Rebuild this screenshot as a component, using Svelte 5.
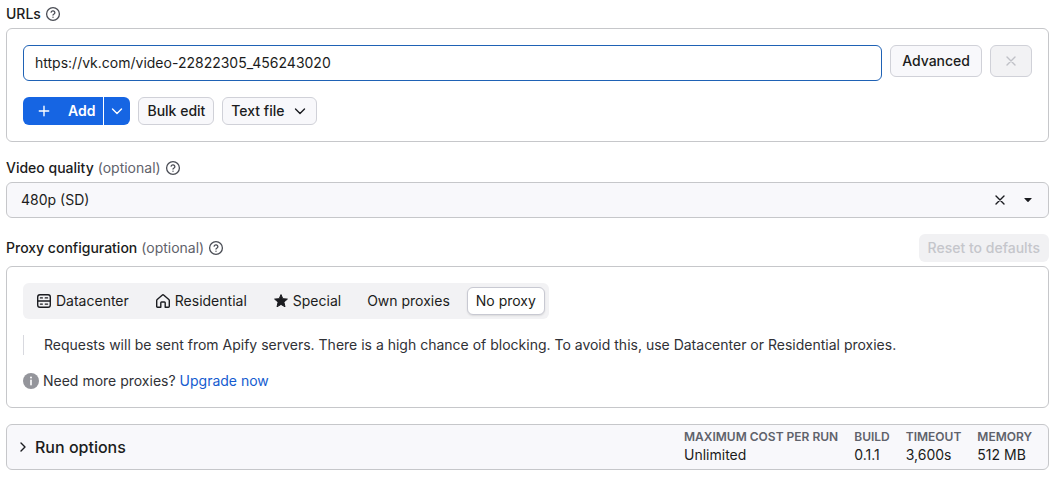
<script>
  let url = $state('https://vk.com/video-22822305_456243020');
  let quality = $state('480p (SD)');
  let proxy = $state('No proxy');
  const proxies = [
    { name: 'Datacenter', icon: 'server' },
    { name: 'Residential', icon: 'home' },
    { name: 'Special', icon: 'star' },
    { name: 'Own proxies' },
    { name: 'No proxy' }
  ];
  const stats = [
    ['Maximum cost per run', 'Unlimited'],
    ['Build', '0.1.1'],
    ['Timeout', '3,600s'],
    ['Memory', '512 MB']
  ];
</script>

{#snippet help()}
  <svg class="help" width="16" height="16" viewBox="0 0 16 16" fill="none" stroke="currentColor" stroke-width="1.3" stroke-linecap="round" stroke-linejoin="round" aria-hidden="true">
    <circle cx="8" cy="8" r="6.4" />
    <path d="M6.1 6.2a1.95 1.95 0 0 1 3.8.6c0 1.3-1.9 1.6-1.9 2.3" />
    <path d="M8 11.2v.1" />
  </svg>
{/snippet}

{#snippet chevron()}
  <svg width="16" height="16" viewBox="0 0 16 16" fill="none" stroke="currentColor" stroke-width="1.4" stroke-linecap="round" stroke-linejoin="round" aria-hidden="true">
    <path d="M3.5 6 8 10.5 12.5 6" />
  </svg>
{/snippet}

{#snippet cross()}
  <svg width="16" height="16" viewBox="0 0 16 16" fill="none" stroke="currentColor" stroke-width="1.4" stroke-linecap="round" aria-hidden="true">
    <path d="M4 4l8 8M12 4l-8 8" />
  </svg>
{/snippet}

<main>
  <section>
    <div class="heading"><label for="url">URLs</label>{@render help()}</div>
    <div class="panel">
      <div class="url-row">
        <input id="url" type="text" spellcheck="false" bind:value={url} />
        <button class="btn large">Advanced</button>
        <button class="btn remove" disabled aria-label="Remove URL">{@render cross()}</button>
      </div>
      <div class="actions">
        <div class="split">
          <button class="add">
            <svg width="16" height="16" viewBox="0 0 16 16" fill="none" stroke="currentColor" stroke-width="1.4" stroke-linecap="round" aria-hidden="true"><path d="M8 3.3v9.4M3.3 8h9.4" /></svg>
            Add
          </button>
          <button class="more" aria-label="More add options">{@render chevron()}</button>
        </div>
        <button class="btn">Bulk edit</button>
        <button class="btn file">Text file {@render chevron()}</button>
      </div>
    </div>
  </section>

  <section>
    <div class="heading"><label for="quality">Video quality</label><span class="optional">(optional)</span>{@render help()}</div>
    <div class="select">
      <select id="quality" bind:value={quality}>
        <option>480p (SD)</option>
      </select>
      <button aria-label="Clear video quality" onclick={() => (quality = '')}>{@render cross()}</button>
      <svg width="8" height="4" viewBox="0 0 8 4" fill="currentColor" aria-hidden="true"><path d="M.6 0h6.8q.5 0 .2.5L4.5 3.7q-.5.5-1 0L.4.5Q.1 0 .6 0z" /></svg>
    </div>
  </section>

  <section>
    <div class="heading tall">
      <span id="proxy-label">Proxy configuration</span><span class="optional">(optional)</span>{@render help()}
      <button class="reset" disabled>Reset to defaults</button>
    </div>
    <div class="panel">
      <div class="tabs" role="group" aria-labelledby="proxy-label">
        {#each proxies as p}
          <button class:active={proxy === p.name} aria-pressed={proxy === p.name} onclick={() => (proxy = p.name)}>
            {#if p.icon === 'server'}
              <svg width="16" height="16" viewBox="0 0 16 16" fill="none" stroke="currentColor" stroke-width="1.4" stroke-linecap="round" aria-hidden="true">
                <rect x="1.7" y="1.7" width="12.6" height="12.6" rx="2.2" />
                <path d="M1.7 8h12.6" />
                <path d="M4.4 4.9h2M9.2 4.9h2.4M4.4 11.1h2M9.2 11.1h2.4" stroke-width="1.2" />
              </svg>
            {:else if p.icon === 'home'}
              <svg width="16" height="16" viewBox="0 0 16 16" fill="none" stroke="currentColor" stroke-width="1.4" stroke-linecap="round" stroke-linejoin="round" aria-hidden="true">
                <path d="M5.8 14.2H2.6q-.9 0-.9-.9V7.6q0-.6.5-1.1l4.9-4.3q.9-.8 1.8 0l4.9 4.3q.5.5.5 1.1v5.7q0 .9-.9.9h-3.2V9.8q0-.8-.8-.8H6.6q-.8 0-.8.8z" />
              </svg>
            {:else if p.icon === 'star'}
              <svg width="16" height="16" viewBox="0 0 16 16" fill="currentColor" stroke="currentColor" stroke-width="1" stroke-linejoin="round" aria-hidden="true">
                <path d="M8 1.6l1.8 4.1 4.6.4-3.5 3 1.1 4.7L8 11.4l-4 2.4 1.1-4.7-3.5-3 4.6-.4z" />
              </svg>
            {/if}
            {p.name}
          </button>
        {/each}
      </div>
      <p class="note">Requests will be sent from Apify servers. There is a high chance of blocking. To avoid this, use Datacenter or Residential proxies.</p>
      <p class="more-proxies">
        <svg width="16" height="16" viewBox="0 0 16 16" aria-hidden="true">
          <circle cx="8" cy="8" r="8" fill="#94959b" />
          <circle cx="8" cy="4.6" r="1" fill="#fff" />
          <path d="M8 7.4v4.4" stroke="#fff" stroke-width="1.6" stroke-linecap="round" />
        </svg>
        <span>Need more proxies? <a href="#upgrade">Upgrade now</a></span>
      </p>
    </div>
  </section>

  <section class="run">
    <button aria-expanded="false">
      <svg width="8" height="12" viewBox="0 0 8 12" fill="none" stroke="currentColor" stroke-width="1.4" stroke-linecap="round" stroke-linejoin="round" aria-hidden="true"><path d="M2 2 6 6 2 10" /></svg>
      Run options
    </button>
    <dl>
      {#each stats as [name, value]}
        <div><dt>{name}</dt><dd>{value}</dd></div>
      {/each}
    </dl>
  </section>
</main>

<style>
  :global(body) { margin: 0; background: #fff; }
  main {
    display: flex;
    flex-direction: column;
    gap: 16px;
    padding: 4px 7px 7px 6px;
    font: 400 14px/20px Inter, sans-serif;
    color: #1b1c20;
  }
  main :is(button, input, select) { box-sizing: border-box; font: inherit; color: inherit; margin: 0; }
  button { display: flex; align-items: center; justify-content: center; padding: 0; border: 0; background: none; white-space: nowrap; cursor: pointer; }
  button:disabled { cursor: default; }
  svg { flex: none; display: block; }
  p, dl, dd { margin: 0; }
  .heading { display: flex; align-items: center; gap: 4px; min-height: 20px; margin-bottom: 4px; font-weight: 500; }
  .tall { min-height: 28px; }
  .optional { font-weight: 400; color: #5f626b; }
  .help { color: #4a4d55; }
  main .reset { margin-left: auto; height: 28px; padding: 0 9px; border-radius: 6px; background: #f1f1f3; color: #c5c6cb; font-weight: 500; }
  .panel { display: flex; flex-direction: column; gap: 16px; padding: 16px; border: 1px solid #c6c7ca; border-radius: 6px; }
  .url-row { display: flex; gap: 8px; align-items: flex-start; }
  input { flex: 1; min-width: 0; height: 36px; padding: 0 11px 1px; border: 1px solid #1f62b5; border-radius: 6px; background: #fff; outline: none; }
  main .btn { height: 28px; padding: 0 8px; border: 1px solid #d0d1d8; border-radius: 6px; background: #f8f8fb; font-weight: 500; }
  main .btn.large { height: 32px; padding: 0 11px; }
  main .btn.remove { width: 42px; height: 32px; background: #f2f2f4; color: #c0c1c7; }
  .actions { display: flex; gap: 8px; }
  main .file { gap: 8px; }
  .split { display: flex; gap: 1px; color: #fff; }
  main .split button { height: 28px; background: #1665e3; }
  main .split .add { gap: 16px; padding: 0 8px 0 13px; border-radius: 6px 0 0 6px; font-weight: 600; }
  main .split .more { width: 26px; border-radius: 0 6px 6px 0; }
  .select { display: flex; align-items: center; padding-right: 16px; border: 1px solid #c6c7ca; border-radius: 6px; background: #f8f8fb; }
  select { flex: 1; height: 34px; padding: 0 14px; border: 0; background: none; appearance: none; outline: none; }
  .select button { width: 16px; height: 16px; margin-right: 16px; }
  .tabs { align-self: flex-start; display: flex; gap: 8px; padding: 4px; border-radius: 6px; background: #f2f2f4; }
  main .tabs button { gap: 4px; height: 28px; padding: 0 8px; border: 1px solid transparent; border-radius: 6px; }
  main .tabs .active { border-color: #c8c9d2; background: #fff; box-shadow: 0 1px 2px #0000001a; }
  .note { padding-left: 20px; border-left: 1px solid #d8d9df; color: #303136; }
  .more-proxies { display: flex; align-items: center; gap: 4px; color: #303136; }
  a { color: #155cd0; text-decoration: none; }
  .run { display: flex; align-items: center; justify-content: space-between; padding: 4px 16px 4px 12px; border: 1px solid #c6c7ca; border-radius: 6px; background: #f8f8fb; }
  main .run button { gap: 8px; font-size: 16px; font-weight: 500; }
  dl { display: flex; gap: 16px; line-height: 20px; }
  dt { font-size: 12px; line-height: 16px; font-weight: 600; color: #5f626b; text-transform: uppercase; }
</style>
